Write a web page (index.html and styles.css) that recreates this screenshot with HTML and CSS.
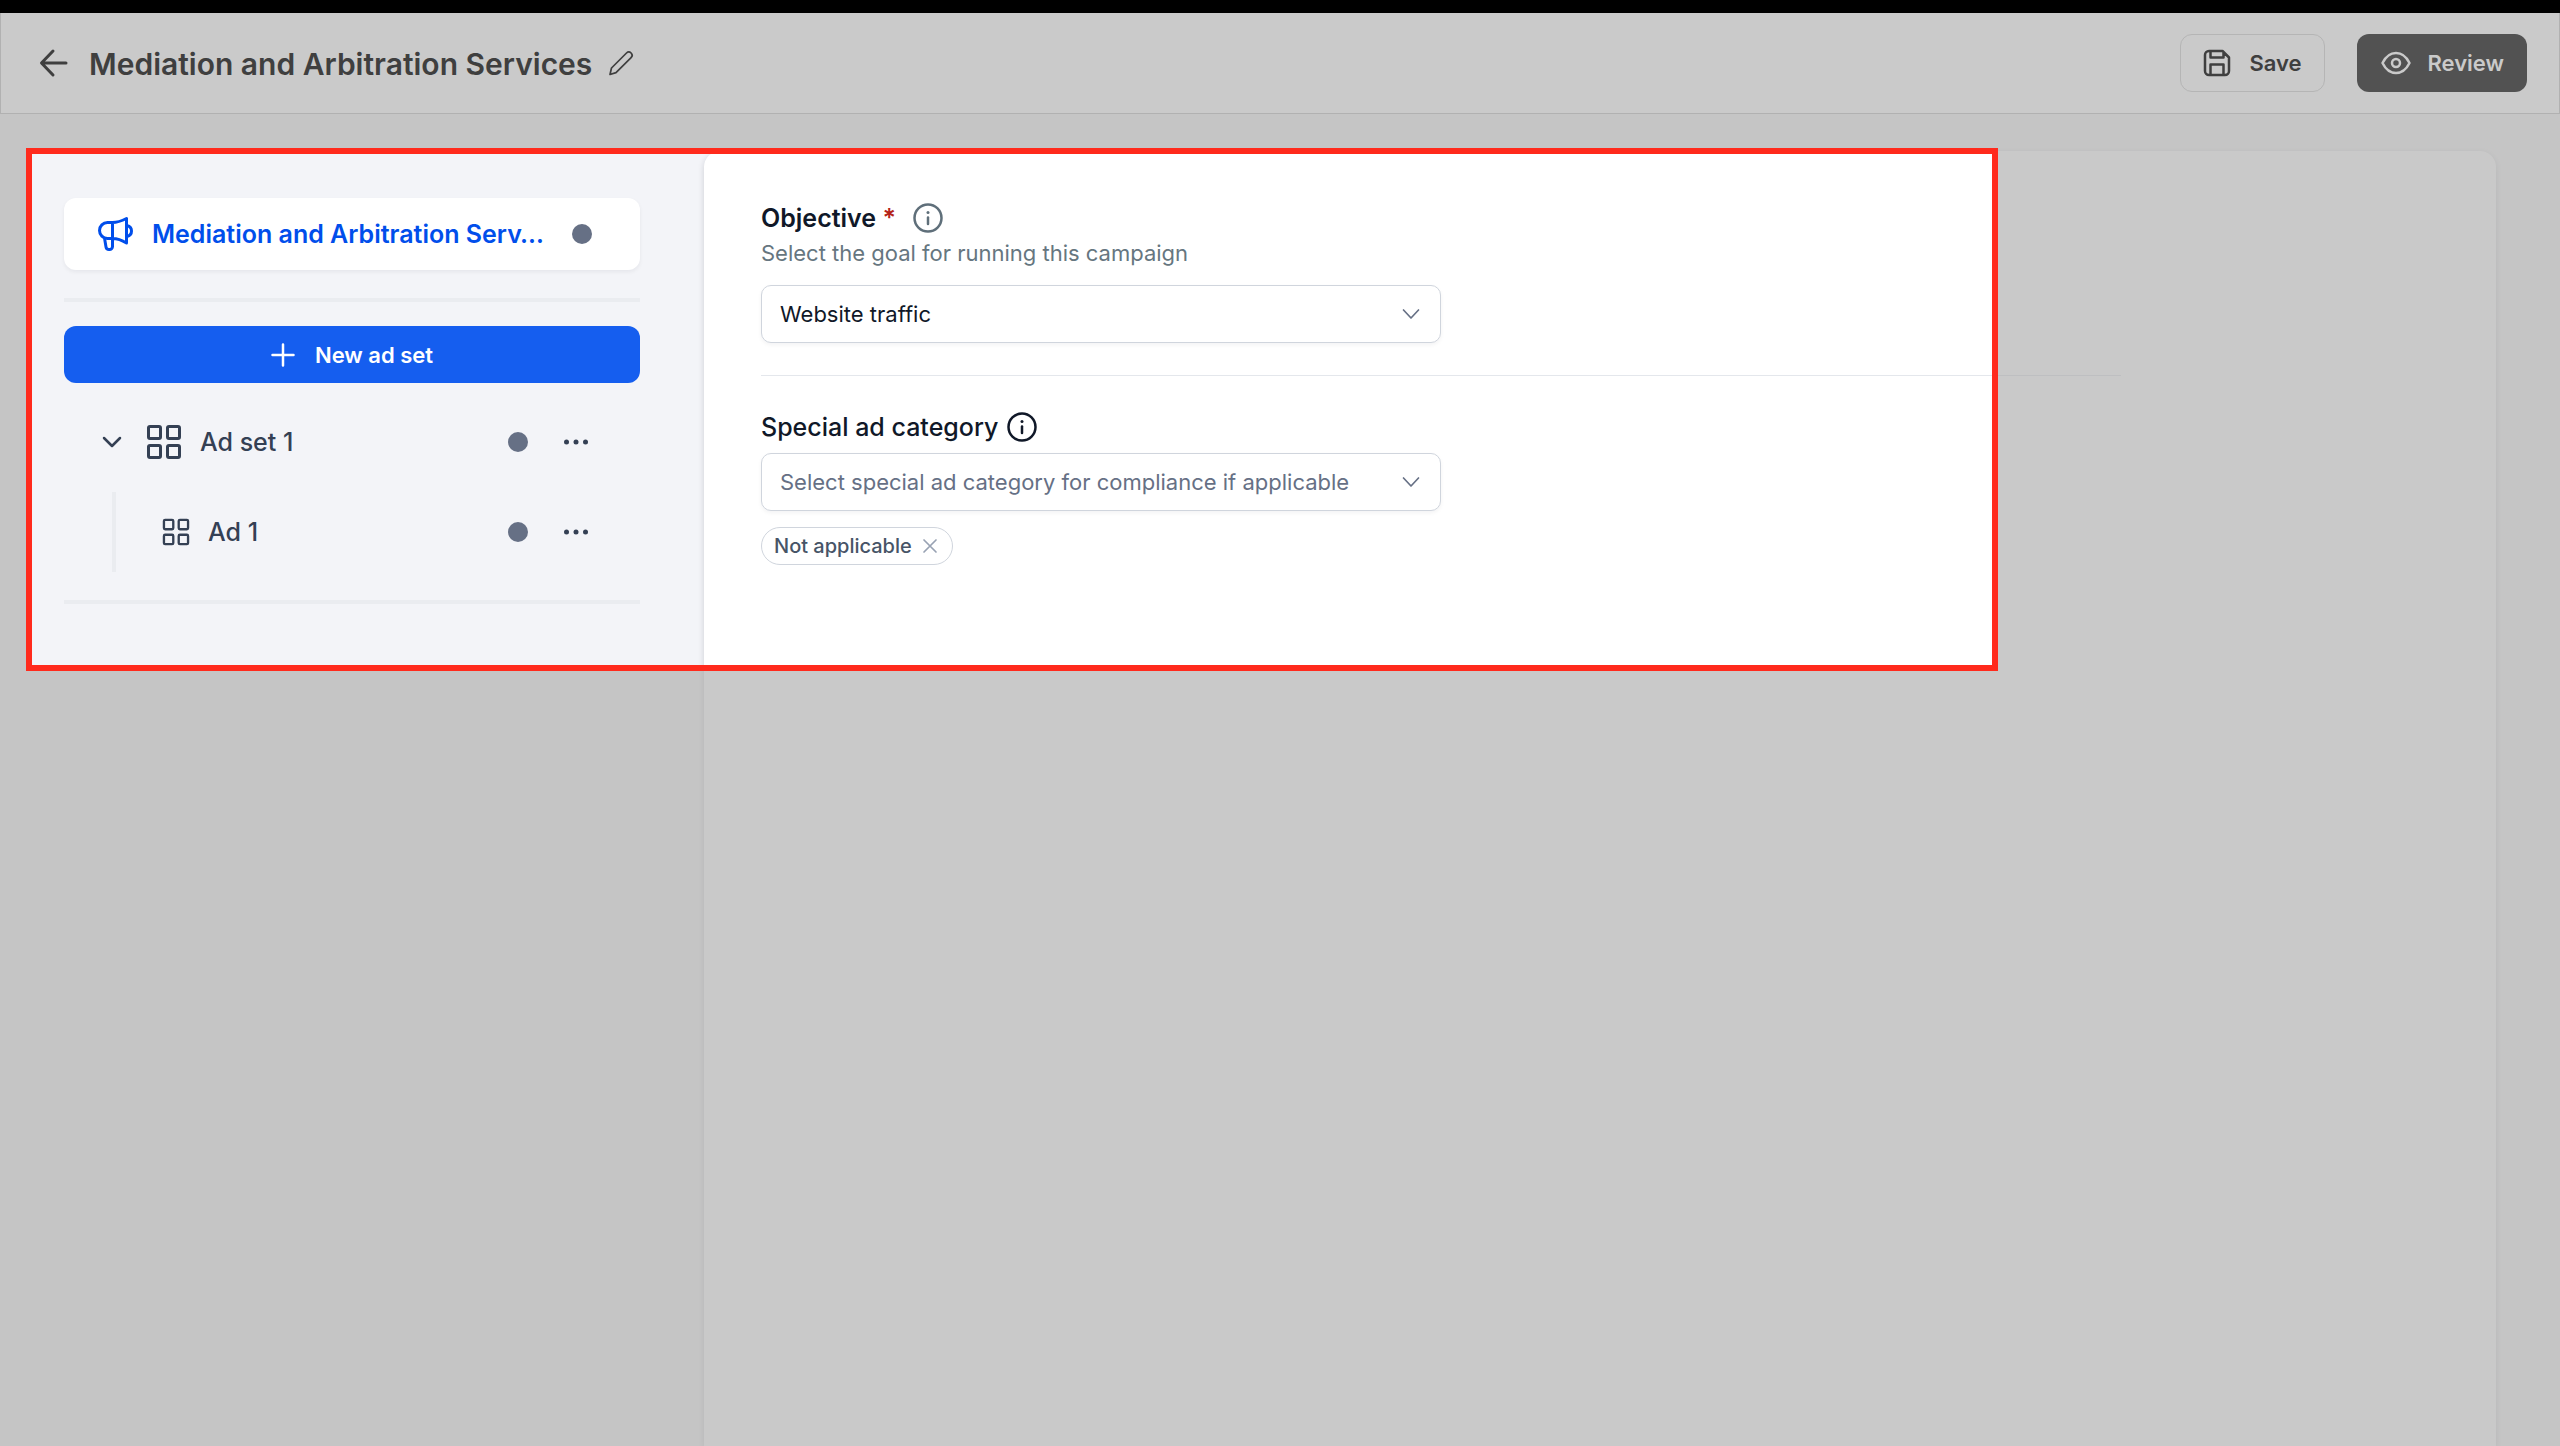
FILE: index.html
```html
<!DOCTYPE html>
<html lang="en">
<head>
<meta charset="utf-8">
<meta name="viewport" content="width=device-width, initial-scale=1">
<title>Mediation and Arbitration Services</title>
<link rel="stylesheet" href="styles.css">
</head>
<body>
<header class="topbar">
  <a class="back" href="#" aria-label="Back">
    <svg class="icon icon-lg" viewBox="0 0 32 32"><path class="bold" d="M29 16H5M16 4L4.500 16 16 28"/></svg>
  </a>
  <h1 class="title">Mediation and Arbitration Services</h1>
  <button class="plain edit" aria-label="Rename">
    <svg class="icon icon-md" viewBox="0 0 28 28"><path class="thin" d="M3 25.500l1.500-6.500L19.500 4a3.200 3.200 0 0 1 4.600 4.600L9 23.600z"/></svg>
  </button>
  <div class="actions">
    <button class="btn btn-save">
      <svg class="icon icon-md" viewBox="0 0 28 28"><path d="M7 2h12.500L26 8.500V22a4 4 0 0 1-4 4H6a4 4 0 0 1-4-4V6a4 4 0 0 1 4-4zM7.500 2v6.500h13V4M7.500 26V15.500h13V26"/></svg>
      Save
    </button>
    <button class="btn btn-review">
      <svg class="icon icon-lg" viewBox="0 0 32 32"><path d="M2.500 16C6 9 10.500 6 16 6s10 3 13.500 10C26 23 21.500 26 16 26S6 23 2.500 16z"/><circle cx="16" cy="16" r="4"/></svg>
      Review
    </button>
  </div>
</header>

<main class="workspace">
  <nav class="sidebar" aria-label="Campaign structure">
    <a class="campaign" href="#">
      <svg class="icon icon-xl" viewBox="0 0 36 36"><path class="bold" d="M14.500 6.500H9.500a8 8 0 0 0 0 16h5zM14.500 6.500c5 0 10-2 14-4v24.500c-4-2.500-9-4.500-14-4.500M29 9.500c6 1.500 6 9.500 0 11M6.500 22l1.500 9a3 3 0 0 0 3 2.500h.5a3 3 0 0 0 3-3v-8"/></svg>
      <span class="campaign-name" title="Mediation and Arbitration Services">Mediation and Arbitration Serv…</span>
      <span class="dot"></span>
    </a>
    <hr class="rule">
    <button class="btn btn-new">
      <svg class="icon icon-sm" viewBox="0 0 24 24"><path d="M12 1.500v21M1.500 12h21"/></svg>
      New ad set
    </button>
    <div class="row">
      <button class="plain toggle" aria-label="Collapse Ad set 1">
        <svg class="icon icon-sm" viewBox="0 0 24 24"><path d="M4 8l8 8 8-8"/></svg>
      </button>
      <svg class="icon icon-xl" viewBox="0 0 36 36"><path class="bold" d="M4 2.500h9a1.500 1.500 0 0 1 1.500 1.500v9a1.500 1.500 0 0 1-1.500 1.500H4A1.500 1.500 0 0 1 2.500 13V4A1.500 1.500 0 0 1 4 2.500zM23 2.500h9A1.500 1.500 0 0 1 33.500 4v9a1.500 1.500 0 0 1-1.500 1.500h-9a1.500 1.500 0 0 1-1.500-1.500V4A1.500 1.500 0 0 1 23 2.500zM4 21.500h9a1.500 1.500 0 0 1 1.500 1.500v9a1.500 1.500 0 0 1-1.500 1.500H4A1.500 1.500 0 0 1 2.500 32v-9A1.500 1.500 0 0 1 4 21.500zM23 21.500h9a1.500 1.500 0 0 1 1.500 1.500v9a1.500 1.500 0 0 1-1.500 1.500h-9a1.500 1.500 0 0 1-1.500-1.500v-9a1.500 1.500 0 0 1 1.500-1.500z"/></svg>
      <a class="row-name" href="#">Ad set 1</a>
      <span class="dot"></span>
      <button class="plain more" aria-label="Ad set 1 options">
        <svg class="icon icon-md fill" viewBox="0 0 28 28"><circle cx="4.500" cy="14" r="2.500"/><circle cx="14" cy="14" r="2.500"/><circle cx="23.500" cy="14" r="2.500"/></svg>
      </button>
    </div>
    <div class="children">
      <div class="row">
        <svg class="icon icon-md" viewBox="0 0 36 36"><path class="bold" d="M4 2.500h9a1.500 1.500 0 0 1 1.500 1.500v9a1.500 1.500 0 0 1-1.500 1.500H4A1.500 1.500 0 0 1 2.500 13V4A1.500 1.500 0 0 1 4 2.500zM23 2.500h9A1.500 1.500 0 0 1 33.500 4v9a1.500 1.500 0 0 1-1.500 1.500h-9a1.500 1.500 0 0 1-1.500-1.500V4A1.500 1.500 0 0 1 23 2.500zM4 21.500h9a1.500 1.500 0 0 1 1.500 1.500v9a1.500 1.500 0 0 1-1.500 1.500H4A1.500 1.500 0 0 1 2.500 32v-9A1.500 1.500 0 0 1 4 21.500zM23 21.500h9a1.500 1.500 0 0 1 1.500 1.500v9a1.500 1.500 0 0 1-1.500 1.500h-9a1.500 1.500 0 0 1-1.500-1.500v-9a1.500 1.500 0 0 1 1.500-1.500z"/></svg>
        <a class="row-name" href="#">Ad 1</a>
        <span class="dot"></span>
        <button class="plain more" aria-label="Ad 1 options">
          <svg class="icon icon-md fill" viewBox="0 0 28 28"><circle cx="4.500" cy="14" r="2.500"/><circle cx="14" cy="14" r="2.500"/><circle cx="23.500" cy="14" r="2.500"/></svg>
        </button>
      </div>
    </div>
    <hr class="rule rule-end">
  </nav>

  <form class="panel">
    <section class="field field-objective">
      <div class="label-row">
        <label class="label strong" for="objective">Objective <span class="required">*</span></label>
        <svg class="icon icon-lg muted" viewBox="0 0 32 32"><circle cx="16" cy="16" r="13.500"/><path d="M16 15.500v6.500"/><circle class="pip" cx="16" cy="10.500" r="1.500"/></svg>
      </div>
      <p class="hint">Select the goal for running this campaign</p>
      <div class="select-wrap">
        <select class="select" id="objective"><option>Website traffic</option></select>
        <svg class="icon icon-sm chevron" viewBox="0 0 24 24"><path class="thin" d="M4.500 8l7.500 8 7.500-8"/></svg>
      </div>
    </section>
    <section class="field field-category">
      <div class="label-row tight">
        <label class="label" for="category">Special ad category</label>
        <svg class="icon icon-lg" viewBox="0 0 32 32"><circle cx="16" cy="16" r="13.500"/><path d="M16 15.500v6.500"/><circle class="pip" cx="16" cy="10.500" r="1.500"/></svg>
      </div>
      <div class="select-wrap">
        <select class="select placeholder" id="category"><option>Select special ad category for compliance if applicable</option></select>
        <svg class="icon icon-sm chevron" viewBox="0 0 24 24"><path class="thin" d="M4.500 8l7.500 8 7.500-8"/></svg>
      </div>
      <div class="tag">Not applicable
        <button class="plain remove" type="button" aria-label="Remove Not applicable">
          <svg class="icon icon-xs" viewBox="0 0 16 16"><path class="thin" d="M2 2l12 12M14 2L2 14"/></svg>
        </button>
      </div>
    </section>
  </form>
  <div class="spotlight"></div>
</main>
</body>
</html>
```
FILE: styles.css
```css
* {
  box-sizing: border-box;
}

body {
  margin: 0;
  min-height: 100vh;
  display: flex;
  flex-direction: column;
  border-top: 13px solid #000;
  background: #f5f5f5;
  color: #101828;
  font-family: Inter, "Liberation Sans", sans-serif;
  font-size: 22px;
}

a {
  color: inherit;
  text-decoration: none;
}

button,
select {
  font: inherit;
  color: inherit;
}

.icon {
  flex: none;
  display: block;
  fill: none;
  stroke: currentColor;
  stroke-width: 2.500;
  stroke-linecap: round;
  stroke-linejoin: round;
}

.icon-xs { width: 16px; height: 16px; }
.icon-sm { width: 24px; height: 24px; }
.icon-md { width: 28px; height: 28px; }
.icon-lg { width: 32px; height: 32px; }
.icon-xl { width: 36px; height: 36px; }

.thin { stroke-width: 1.700; }
.bold { stroke-width: 3; }

.fill,
.pip {
  fill: currentColor;
  stroke: none;
}

.plain {
  padding: 0;
  border: 0;
  background: none;
}

/* Top bar */
.topbar {
  display: flex;
  align-items: center;
  height: 101px;
  padding: 0 32px 0 36px;
  border: 1px solid #b1b1b1;
  border-top: 0;
  background: #cacaca;
  color: #3f3f3f;
}

.title {
  margin: 0 15px 0 20px;
  padding-top: 2px;
  font-size: 30px;
  font-weight: 600;
  line-height: 40px;
}

.actions {
  display: flex;
  gap: 32px;
  margin-left: auto;
}

.btn {
  display: flex;
  align-items: center;
  justify-content: center;
  height: 58px;
  padding: 0 22px;
  border: 1px solid transparent;
  border-radius: 12px;
  font-weight: 600;
}

.btn-save {
  gap: 18px;
  border-color: #b5b5b5;
  background: none;
}

.btn-review {
  gap: 16px;
  background: #525252;
  color: #cacaca;
}

/* Workspace */
.workspace {
  position: relative;
  flex: 1;
  display: flex;
  gap: 64px;
  padding: 37px 64px 0;
  overflow: hidden;
}

.sidebar {
  position: relative;
  width: 576px;
  padding-top: 47px;
  color: #344054;
  font-size: 25px;
  font-weight: 500;
}

.campaign {
  display: flex;
  align-items: center;
  height: 72px;
  padding: 0 48px 0 34px;
  border-radius: 12px;
  background: #fff;
  box-shadow: 0 2px 4px rgba(16, 24, 40, .06);
  color: #004eeb;
  font-weight: 600;
}

.campaign-name {
  flex: 1;
  margin: 0 16px 0 18px;
  white-space: nowrap;
}

.dot {
  flex: none;
  width: 20px;
  height: 20px;
  border-radius: 50%;
  background: #667085;
}

.rule {
  height: 4px;
  margin: 28px 0 24px;
  border: 0;
  background: #eaecf0;
}

.rule-end {
  margin: 28px 0;
}

.btn-new {
  gap: 20px;
  width: 100%;
  height: 57px;
  background: #155eef;
  color: #fff;
  font-size: 22px;
}

.row {
  display: flex;
  align-items: center;
  padding-right: 50px;
}

.sidebar > .row {
  height: 72px;
  margin: 23px 0 14px;
  padding-left: 36px;
}

.toggle {
  margin-right: 22px;
}

.row-name {
  flex: 1;
  margin-left: 18px;
}

.more {
  margin-left: 34px;
}

.children {
  margin-left: 48px;
  border-left: 4px solid #eaecf0;
}

.children .row {
  height: 80px;
  padding-left: 46px;
}

/* Editor panel */
.panel {
  position: relative;
  flex: 1;
  padding: 51px 57px;
  border-radius: 16px 16px 0 0;
  background: #fff;
  box-shadow: 0 2px 6px rgba(16, 24, 40, .16);
}

.field {
  max-width: 1360px;
}

.field-objective {
  padding-bottom: 32px;
  border-bottom: 1px solid #e4e7ec;
}

.field-category {
  padding-top: 35px;
}

.label-row {
  display: flex;
  align-items: center;
  gap: 16px;
  height: 32px;
}

.tight {
  gap: 8px;
  margin-bottom: 10px;
}

.label {
  font-size: 25px;
  font-weight: 500;
}

.strong {
  font-weight: 600;
}

.required {
  color: #b42318;
}

.muted {
  color: #5f6f7a;
}

.hint {
  margin: 5px 0 18px;
  color: #667680;
  line-height: 28px;
}

.select-wrap {
  display: grid;
  align-items: center;
  width: 50%;
}

.select-wrap > * {
  grid-area: 1 / 1;
}

.select {
  appearance: none;
  width: 100%;
  height: 58px;
  padding: 0 56px 0 18px;
  border: 1px solid #d0d5dd;
  border-radius: 10px;
  background: #fff;
  box-shadow: 0 2px 4px rgba(16, 24, 40, .05);
}

.placeholder,
.chevron {
  color: #667085;
}

.chevron {
  justify-self: end;
  margin-right: 18px;
  pointer-events: none;
}

.tag {
  display: inline-flex;
  align-items: center;
  gap: 10px;
  height: 38px;
  margin-top: 16px;
  padding: 0 14px 0 12px;
  border: 1px solid #d0d5dd;
  border-radius: 19px;
  color: #475467;
  font-size: 20px;
  font-weight: 500;
}

.remove {
  color: #98a2b3;
}

/* Highlight frame that dims everything around it; ::before is its own backdrop */
.spotlight,
.workspace::before {
  position: absolute;
  top: 34px;
  left: 26px;
  right: 562px;
  height: 523px;
  pointer-events: none;
}

.workspace::before {
  content: "";
  background: #f3f4f8;
}

.spotlight {
  border: 6px solid #ff2a1c;
  box-shadow: 0 0 0 3000px rgba(165, 165, 165, .6);
}
```
